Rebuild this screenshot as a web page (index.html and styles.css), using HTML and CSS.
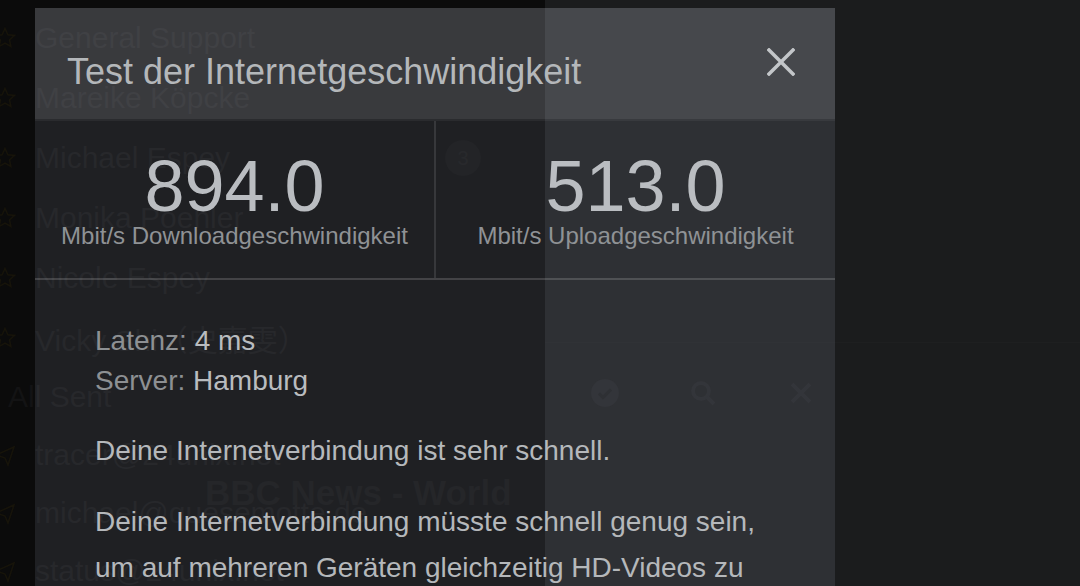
FILE: index.html
```html
<!DOCTYPE html>
<html lang="de">
<head>
    <meta charset="UTF-8">
    <meta name="viewport" content="width=device-width, initial-scale=1.0">
    <title>Test der Internetgeschwindigkeit</title>
    <link rel="stylesheet" href="styles.css">
</head>
<body>
    <!-- App behind the dialog -->
    <div class="app" aria-hidden="true">
        <div class="sidebar">
            <ul class="contacts">
                <li class="row"><svg class="star" viewBox="0 0 24 24"><path d="M12 2.5l2.9 6.2 6.6.7-5 4.5 1.4 6.6L12 17.2l-5.9 3.3 1.4-6.6-5-4.5 6.6-.7z"/></svg><span>General Support</span></li>
                <li class="row"><svg class="star" viewBox="0 0 24 24"><path d="M12 2.5l2.9 6.2 6.6.7-5 4.5 1.4 6.6L12 17.2l-5.9 3.3 1.4-6.6-5-4.5 6.6-.7z"/></svg><span>Mareike Köpcke</span></li>
                <li class="row"><svg class="star" viewBox="0 0 24 24"><path d="M12 2.5l2.9 6.2 6.6.7-5 4.5 1.4 6.6L12 17.2l-5.9 3.3 1.4-6.6-5-4.5 6.6-.7z"/></svg><span>Michael Espey</span><span class="badge">3</span></li>
                <li class="row"><svg class="star" viewBox="0 0 24 24"><path d="M12 2.5l2.9 6.2 6.6.7-5 4.5 1.4 6.6L12 17.2l-5.9 3.3 1.4-6.6-5-4.5 6.6-.7z"/></svg><span>Monika Poehler</span></li>
                <li class="row"><svg class="star" viewBox="0 0 24 24"><path d="M12 2.5l2.9 6.2 6.6.7-5 4.5 1.4 6.6L12 17.2l-5.9 3.3 1.4-6.6-5-4.5 6.6-.7z"/></svg><span>Nicole Espey</span></li>
                <li class="row"><svg class="star" viewBox="0 0 24 24"><path d="M12 2.5l2.9 6.2 6.6.7-5 4.5 1.4 6.6L12 17.2l-5.9 3.3 1.4-6.6-5-4.5 6.6-.7z"/></svg><span>Vicky Shi<span class="cjk">（史嘉雯）</span></span></li>
            </ul>
            <div class="section-title">All Sent</div>
            <ul class="sent">
                <li class="row sent-row"><svg class="plane" viewBox="0 0 24 24"><path d="M3 12l18-8-6 18-3-7z"/></svg><span>tracer@24unix.net</span></li>
                <li class="row sent-row"><svg class="plane" viewBox="0 0 24 24"><path d="M3 12l18-8-6 18-3-7z"/></svg><span>michael@quesemotte.de</span></li>
                <li class="row sent-row"><svg class="plane" viewBox="0 0 24 24"><path d="M3 12l18-8-6 18-3-7z"/></svg><span>status@24unix.net</span></li>
            </ul>
            <div class="feed-title">BBC News - World</div>
        </div>
        <div class="main">
            <div class="main-top"></div>
            <div class="toolbar">
                <svg class="tool" viewBox="0 0 30 30"><circle cx="15" cy="15" r="14"/><path d="M9 15.5l4 4 8-8" class="cut"/></svg>
                <svg class="tool" viewBox="0 0 30 30"><circle cx="13" cy="13" r="8" class="ring"/><path d="M19 19l7 7" class="ring"/></svg>
                <svg class="tool" viewBox="0 0 30 30"><path d="M6 6l18 18M24 6L6 24" class="ring"/></svg>
            </div>
        </div>
    </div>

    <!-- Speed test dialog -->
    <div class="dialog">
        <div class="dialog-header">
            <h1>Test der Internetgeschwindigkeit</h1>
            <svg class="close" viewBox="0 0 28 28"><path d="M2 2l24 24M26 2L2 26"/></svg>
        </div>
        <div class="stats">
            <div class="stat">
                <div class="value">894.0</div>
                <div class="unit">Mbit/s Downloadgeschwindigkeit</div>
            </div>
            <div class="stat">
                <div class="value">513.0</div>
                <div class="unit">Mbit/s Uploadgeschwindigkeit</div>
            </div>
        </div>
        <div class="dialog-body">
            <div class="meta">
                <div><span class="key">Latenz:</span> 4 ms</div>
                <div><span class="key">Server:</span> Hamburg</div>
            </div>
            <p>Deine Internetverbindung ist sehr schnell.</p>
            <p>Deine Internetverbindung müsste schnell genug sein, um auf mehreren Geräten gleichzeitig HD-Videos zu streamen.</p>
        </div>
    </div>
</body>
</html>
```
FILE: styles.css
```css
body {
    margin: 0;
    height: 586px;
    overflow: hidden;
    background-color: #1b1c1d;
    font-family: "Liberation Sans", Arial, "Noto Sans CJK SC", sans-serif;
    position: relative;
}
ul {
    list-style: none;
    margin: 0;
    padding: 0;
}

/* background app */
.app {
    display: flex;
    height: 586px;
}
.sidebar {
    width: 545px;
    flex-shrink: 0;
    background-color: #0b0b0b;
    padding-top: 8px;
    box-sizing: border-box;
    position: relative;
    color: #131314;
    font-size: 30px;
}
.row {
    display: flex;
    align-items: center;
    gap: 18px;
    height: 60px;
    margin-left: -7px;
    padding-right: 64px;
    white-space: nowrap;
}
.star {
    width: 24px;
    height: 24px;
    fill: none;
    stroke: #17140a;
    stroke-width: 1.5;
    flex-shrink: 0;
}
.badge {
    margin-left: auto;
    width: 36px;
    height: 36px;
    border-radius: 50%;
    background-color: #0f0f0f;
    color: #151515;
    font-size: 20px;
    display: flex;
    align-items: center;
    justify-content: center;
}
.section-title {
    height: 58px;
    line-height: 58px;
    padding-left: 8px;
}
.sent-row {
    height: 58px;
}
.plane {
    width: 24px;
    height: 24px;
    fill: none;
    stroke: #17140a;
    stroke-width: 1.5;
    flex-shrink: 0;
}
.feed-title {
    position: absolute;
    left: 205px;
    top: 473px;
    font-size: 35px;
    font-weight: bold;
    color: #111111;
}
.main {
    flex: 1;
}
.main-top {
    height: 342px;
    border-bottom: 1px solid #1e1f20;
}
.toolbar {
    display: flex;
    align-items: center;
    gap: 68px;
    height: 100px;
    padding-left: 45px;
}
.tool {
    width: 30px;
    height: 30px;
    fill: #212224;
}
.tool .cut {
    fill: none;
    stroke: #1b1c1d;
    stroke-width: 3;
}
.tool .ring {
    fill: none;
    stroke: #212224;
    stroke-width: 4;
}

/* dialog */
.dialog {
    position: absolute;
    left: 35px;
    top: 8px;
    width: 800px;
    height: 640px;
    background-color: rgba(211, 221, 251, 0.1);
    color: #b6b9bc;
}
.dialog-header {
    display: flex;
    justify-content: space-between;
    align-items: flex-start;
    height: 113px;
    box-sizing: border-box;
    padding: 44px 40px 0 32px;
    background-color: rgba(245, 250, 255, 0.12);
    border-bottom: 2px solid rgba(255, 255, 255, 0.05);
    background-clip: padding-box;
}
.dialog-header h1 {
    margin: 0;
    font-size: 36px;
    font-weight: normal;
    line-height: 40px;
    color: #b4b7ba;
}
.close {
    width: 28px;
    height: 28px;
    margin-top: -4px;
    stroke: #c3c6c9;
    stroke-width: 3.5;
    stroke-linecap: square;
}
.stats {
    display: flex;
    border-bottom: 2px solid rgba(255, 255, 255, 0.16);
}
.stat {
    flex: 1;
    text-align: center;
    padding: 30px 0 28px;
}
.stat + .stat {
    border-left: 2px solid rgba(255, 255, 255, 0.11);
}
.value {
    font-size: 72px;
    line-height: 70px;
    color: #babdc1;
}
.unit {
    font-size: 24px;
    line-height: 29px;
    color: #8f9295;
}
.dialog-body {
    padding: 41px 60px 0;
    font-size: 28px;
}
.meta {
    line-height: 40px;
    color: #b9bcbf;
    margin-bottom: 27px;
}
.key {
    color: #8d9093;
}
.dialog-body p {
    margin: 0 0 25px;
    line-height: 46px;
    color: #b5b8bb;
}
```
